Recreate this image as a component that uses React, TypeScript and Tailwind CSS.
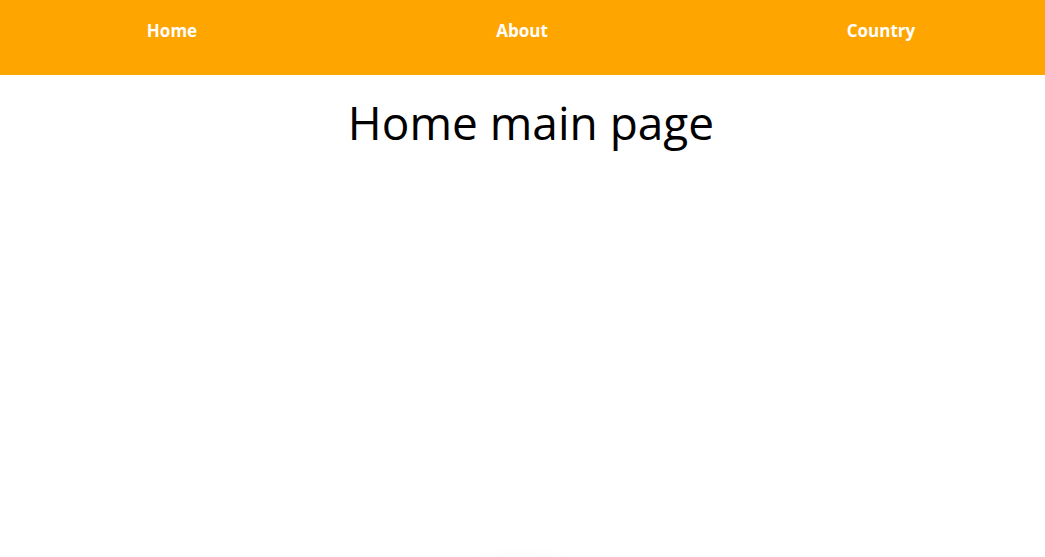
import React from "react";

export default function App() {
  return (
    <div className="w-[1045px] h-[557px] overflow-hidden bg-white" style={{ fontFamily: '"Open Sans", "Noto Sans", sans-serif' }}>
      <nav className="h-[75px] bg-[#ffa500] flex items-start pt-[22px]">
        <a className="w-[120px] ml-[112px] text-center text-white font-bold text-[17px] leading-none">Home</a>
        <a className="w-[120px] ml-[230px] text-center text-white font-bold text-[17px] leading-none">About</a>
        <a className="w-[120px] ml-[239px] text-center text-white font-bold text-[17px] leading-none">Country</a>
      </nav>
      <h1 className="mt-[24px] text-center text-black text-[46px] leading-none font-normal pl-[17px]">Home main page</h1>
      <div className="mt-[418px] mx-auto w-[90px] h-[40px] rounded-full shadow-[0_0_20px_rgba(0,0,0,0.06)]" />
    </div>
  );
}
